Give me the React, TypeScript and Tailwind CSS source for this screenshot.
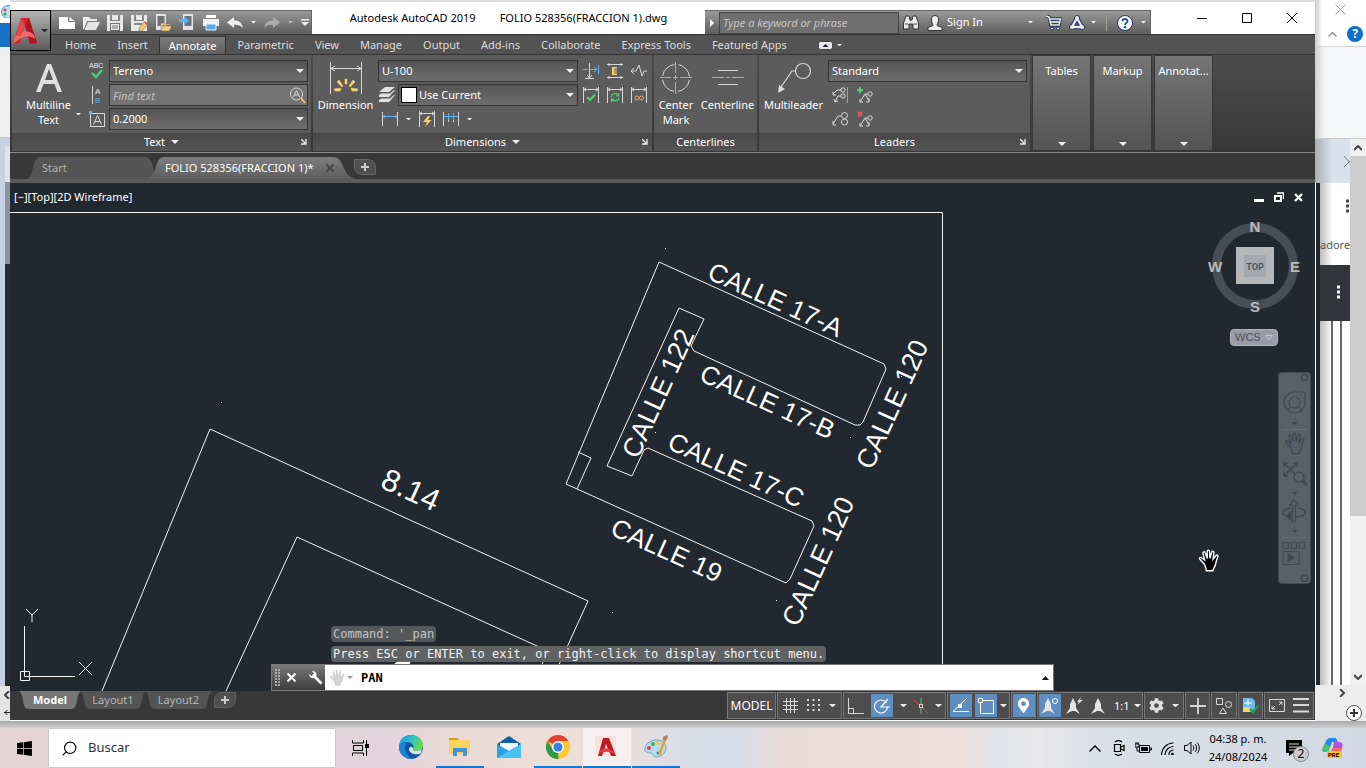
import React from "react";
import { FaWindows, FaCog, FaMapMarkerAlt } from "react-icons/fa";
import { Search } from "lucide-react";

type Kids = { children?: React.ReactNode };

const HAND =
  "M7.5 14.5L3.5 10.5C2.6 9.4 4 8.2 5 9L8 11.2L6.4 4.8C6.2 3.4 8 3 8.4 4.3L10.4 9.8L10.4 3C10.4 1.6 12.4 1.6 12.5 3L13 9.6L14.6 3.8C15 2.5 16.8 3 16.6 4.3L15.8 10.4L18.6 7C19.5 6 20.9 7 20.3 8.1C18.5 11.5 18.8 13.5 17.8 16C17 18.5 15.8 19.5 15.6 21L9.6 21C9.4 18.5 8.3 16 7.5 14.5Z";

function Caret({ color = "#f0f0f0", size = 8 }: { color?: string; size?: number }) {
  return (
    <svg width={size} height={size / 2} viewBox="0 0 8 4" className="shrink-0">
      <path d="M0 0H8L4 4Z" fill={color} />
    </svg>
  );
}

function Glyph({ w = 18, h = 18, box, children }: Kids & { w?: number; h?: number; box?: string }) {
  return (
    <svg width={w} height={h} viewBox={box ?? `0 0 ${w} ${h}`} fill="none" stroke="#d8d8d8" className="shrink-0">
      {children}
    </svg>
  );
}

function IconButton({ label, className = "", children }: Kids & { label: string; className?: string }) {
  return (
    <button aria-label={label} className={`flex shrink-0 items-center justify-center ${className}`}>
      {children}
    </button>
  );
}

function Combo({ label, value, className = "" }: { label: string; value: string; className?: string }) {
  return (
    <div className="relative min-w-0 flex-1">
      <select
        aria-label={label}
        className={`block h-[22px] w-full appearance-none border border-[#333] bg-linear-to-b from-[#555] to-[#6d6d6d] px-[3px] text-[11px] text-white ${className}`}
      >
        <option>{value}</option>
      </select>
      <span className="pointer-events-none absolute right-1 top-[9px]">
        <Caret />
      </span>
    </div>
  );
}

/* ---------- title bar ---------- */

function QuickAccess() {
  return (
    <div className="flex h-6 w-[261px] shrink-0 items-center gap-2 self-end border-t border-r border-[#666] bg-linear-to-b from-[#9a9a9a] to-[#5d5d5d] pl-2">
      <IconButton label="New" className="w-4">
        <Glyph w={16} h={16}><path d="M0 2H9V7H16V14H0Z" fill="#fff" stroke="none" /><path d="M10.500 2L15.500 6H10.500Z" fill="#fff" stroke="none" /></Glyph>
      </IconButton>
      <IconButton label="Open" className="w-4">
        <Glyph w={17} h={16}><path d="M0 14V2H6L8 4H14V6H4L1 14Z" fill="#eee" stroke="none" /><path d="M5 7H17L13 15H1.500Z" fill="#e4e4e4" stroke="none" /></Glyph>
      </IconButton>
      <IconButton label="Save" className="w-4">
        <Glyph w={16} h={16}><path d="M0 0H3V6H13V0H16V16H0Z M3 8V16H13V8Z" fill="#e8e8e8" fillRule="evenodd" stroke="none" /><path d="M5 0H11V5H5Z M4 9H12V15H4Z" fill="#e8e8e8" stroke="none" /><path d="M5 11H11M5 13H11" stroke="#777" /></Glyph>
      </IconButton>
      <IconButton label="Save As" className="w-4">
        <Glyph w={16} h={16}><path d="M0 0H3V6H13V0H16V16H0Z" fill="#e8e8e8" stroke="none" /><path d="M5 0H11V5H5Z" fill="#e8e8e8" stroke="none" /><path d="M3 8H11V10H3Z" fill="#888" stroke="none" /><path d="M8 13L13 7L16 10L11 16L8 16Z" fill="#f7c56c" stroke="#666" strokeWidth=".5" /><path d="M13 7L14 6L17 9L16 10Z" fill="#e05050" stroke="none" /></Glyph>
      </IconButton>
      <IconButton label="Open from mobile" className="w-4">
        <Glyph w={16} h={17}><path d="M1 0H11V16H1Z" fill="#e4e4e4" stroke="none" /><path d="M2.500 2H9.500V12H2.500Z" fill="#707070" stroke="none" /><path d="M6 9H10L11 10H15V11H8L6 16Z M8.500 12H17L14 17H6.500Z" fill="#f7c97b" stroke="#777" strokeWidth=".4" /></Glyph>
      </IconButton>
      <IconButton label="Save to mobile" className="w-4">
        <Glyph w={16} h={17}><path d="M4 0H14V16H4Z" fill="#e4e4e4" stroke="none" /><path d="M5.500 2H12.500V12H5.500Z" fill="#707070" stroke="none" /><path d="M0 5H5V2L10 6.500L5 11V8H0Z" fill="#5fb2f5" stroke="none" /></Glyph>
      </IconButton>
      <IconButton label="Plot" className="w-4">
        <Glyph w={16} h={16}><path d="M3 0H13V3H3Z" fill="#fff" stroke="none" /><path d="M0 4H16V11H0Z" fill="#f0f0f0" stroke="none" /><path d="M3 9H13V15H3Z" fill="#58aaf0" stroke="#eee" /></Glyph>
      </IconButton>
      <IconButton label="Undo" className="w-4">
        <Glyph w={16} h={12}><path d="M0 5.500L7 0V3.500C12 3 15 6 16 11C13 8 10 7.500 7 8V11Z" fill="#f0f0f0" stroke="none" /></Glyph>
      </IconButton>
      <Caret size={5} />
      <IconButton label="Redo" className="w-4">
        <Glyph w={16} h={12}><path d="M16 5.500L9 0V3.500C4 3 1 6 0 11C3 8 6 7.500 9 8V11Z" fill="#aaa" stroke="none" /></Glyph>
      </IconButton>
      <Caret size={5} color="#bbb" />
      <IconButton label="Customize quick access toolbar">
        <Glyph w={8} h={7}><path d="M0 0H8V1.500H0Z M0 3H8L4 7Z" fill="#f0f0f0" stroke="none" /></Glyph>
      </IconButton>
    </div>
  );
}

function InfoCenter() {
  return (
    <div className="flex h-6 w-[446px] shrink-0 items-center self-end border-t border-r border-[#666] bg-linear-to-b from-[#9a9a9a] to-[#5d5d5d] text-[11px] text-white">
      <IconButton label="Collapse search" className="w-3.5">
        <Glyph w={4} h={8}><path d="M0 0L4 4L0 8Z" fill="#fff" stroke="none" /></Glyph>
      </IconButton>
      <input
        aria-label="Search help"
        placeholder="Type a keyword or phrase"
        className="h-[22px] w-[180px] border border-[#444] bg-[#6f6f6f] px-[3px] text-[11px] italic placeholder:text-[#c6c6c6]"
      />
      <IconButton label="Search" className="w-6">
        <Glyph w={16} h={15}><path d="M3 1H6L7 5H9L10 1H13L15.500 8V14H10V9H6V14H.5V8Z" fill="#e9e9e9" stroke="#333" /><path d="M7.500 2V6M2 9H5M11 9H14" stroke="#444" /></Glyph>
      </IconButton>
      <button className="flex h-full items-center gap-1 pl-1">
        <Glyph w={16} h={16}><path d="M8 .5C11 .5 12 3 11.500 6C11 8 10 9 10 10.500L15 12.500V15.500H1V12.500L6 10.500C6 9 5 8 4.500 6C4 3 5 .5 8 .5Z" fill="#eee" stroke="#333" /></Glyph>
        Sign In
      </button>
      <span className="flex-1" />
      <Caret size={5} />
      <IconButton label="App store" className="ml-2.5 w-5">
        <Glyph w={17} h={16}><path d="M1 1L4 2L6 10H14L15.500 4H5" stroke="#1e2c58" strokeWidth="3.400" /><path d="M1 1L4 2L6 10H14L15.500 4H5M5 7H14" stroke="#eee" strokeWidth="1.600" /><circle cx="7" cy="13.500" r="1.500" fill="#eee" stroke="#1e2c58" /><circle cx="13" cy="13.500" r="1.500" fill="#eee" stroke="#1e2c58" /></Glyph>
      </IconButton>
      <IconButton label="Stay connected" className="mx-1 w-5">
        <Glyph w={16} h={15}><path d="M8 3L13 12H3Z" stroke="#1e2c58" strokeWidth="4.500" strokeLinejoin="round" /><circle cx="8" cy="3" r="2.500" fill="#eee" stroke="#1e2c58" /><circle cx="13" cy="12" r="2.500" fill="#eee" stroke="#1e2c58" /><circle cx="3" cy="12" r="2.500" fill="#eee" stroke="#1e2c58" /><path d="M8 3L13 12H3Z" stroke="#e6e8ee" strokeWidth="2.400" /></Glyph>
      </IconButton>
      <Caret size={5} />
      <span className="mx-2.5 h-4 w-px bg-[#a0a0a0]" />
      <IconButton label="Help" className="w-4">
        <Glyph w={16} h={16}><circle cx="8" cy="8" r="7.500" fill="#fff" stroke="#20336b" /><path d="M5.500 6.300C5.500 3.300 10.500 3.300 10.500 6.200C10.500 8 8 8 8 10" stroke="#2450a8" strokeWidth="1.900" /><circle cx="8" cy="12.200" r="1.200" fill="#2450a8" stroke="none" /></Glyph>
      </IconButton>
      <span className="mx-1 flex pl-1"><Caret size={5} /></span>
    </div>
  );
}

const TABS = ["Home", "Insert", "Annotate", "Parametric", "View", "Manage", "Output", "Add-ins", "Collaborate", "Express Tools", "Featured Apps"];

function Header() {
  return (
    <header className="flex bg-[#535353]">
      <div className="flex w-[41px] shrink-0 flex-col border-t-8 border-white">
        <IconButton label="Application menu" className="h-[41px] border border-black bg-linear-to-b from-[#b4b4b4] to-[#5d5d5d]">
          <Glyph w={26} h={30}>
            <path d="M8 2H16L24 27L17 28L12 10L7 27L0 28Z" fill="#d4262e" stroke="none" />
            <path d="M12 10L16 2L24 27L17 28Z" fill="#b01620" stroke="none" />
            <path d="M2 20C8 14 16 14 21 19L22 23C15 18 9 20 0 28Z" fill="#f06868" stroke="none" />
            <path d="M8 2L12 10L8 20L3 20Z" fill="#e5484d" stroke="none" />
          </Glyph>
          <span className="ml-0.5 flex"><Caret color="#222b3c" size={7} /></span>
        </IconButton>
      </div>
      <div className="flex min-w-0 flex-1 flex-col">
        <div className="flex h-8 bg-white">
          <QuickAccess />
          <h1 className="flex min-w-0 flex-1 items-center justify-center gap-6 whitespace-nowrap text-[11px] text-black">
            <span>Autodesk AutoCAD 2019</span>
            <span>FOLIO 528356(FRACCION 1).dwg</span>
          </h1>
          <InfoCenter />
          <div className="ml-7 flex shrink-0">
            <IconButton label="Minimize" className="w-[45px]"><Glyph w={10} h={10}><path d="M0 5.500H10" stroke="#000" /></Glyph></IconButton>
            <IconButton label="Maximize" className="w-[45px]"><Glyph w={10} h={10}><path d="M.5 .5H9.500V9.500H.5Z" stroke="#000" /></Glyph></IconButton>
            <IconButton label="Close" className="w-[46px]"><Glyph w={10} h={10}><path d="M0 0L10 10M10 0L0 10" stroke="#000" /></Glyph></IconButton>
          </div>
        </div>
        <nav className="flex h-5 items-end gap-px border-t border-[#333] pl-1 text-[11px] text-[#dcdcdc]">
          {TABS.map((t) => (
            <button
              key={t}
              className={
                t === "Annotate"
                  ? "h-[18px] border border-b-0 border-[#333] bg-linear-to-b from-[#7c7c7c] to-[#606060] px-[9px] leading-4 text-white"
                  : "h-[18px] px-2.5 leading-[18px]"
              }
            >
              {t}
            </button>
          ))}
          <IconButton label="Minimize ribbon" className="ml-5 h-[18px] gap-1">
            <Glyph w={15} h={9}><rect x=".5" y=".5" width="14" height="8" rx="2" fill="#e4e8ee" stroke="#444" /><path d="M4.500 6H10.500L7.500 3Z" fill="#222" stroke="none" /></Glyph>
            <Caret size={5} />
          </IconButton>
        </nav>
      </div>
    </header>
  );
}

/* ---------- ribbon ---------- */

function Panel({ title, className, menu, launcher, children }: Kids & { title: string; className: string; menu?: boolean; launcher?: boolean }) {
  return (
    <section className={`flex shrink-0 flex-col bg-[#5c5c5c] ${className}`}>
      <div className="flex flex-1 items-start pt-[5px]">{children}</div>
      <footer className="relative flex h-[18px] items-center justify-center gap-1.5 bg-linear-to-b from-[#484848] to-[#555]">
        {title}
        {menu && <Caret />}
        {launcher && (
          <button aria-label={`${title} settings`} className="absolute right-1 top-1.5">
            <Glyph w={6} h={6}><path d="M0 0L4 4M5 0V5H0" stroke="#eee" strokeWidth="1.300" /></Glyph>
          </button>
        )}
      </footer>
    </section>
  );
}

function BigButton({ lines, className, icon, menu }: { lines: string[]; className: string; icon: React.ReactNode; menu?: boolean }) {
  return (
    <button className={`relative flex shrink-0 flex-col items-center text-[11px] leading-[15px] ${className}`}>
      <span className="mb-0.5 flex h-[35px] items-center">{icon}</span>
      {lines.map((l) => (
        <span key={l}>{l}</span>
      ))}
      {menu && (
        <span className="absolute bottom-3 right-1 flex">
          <Caret size={5} />
        </span>
      )}
    </button>
  );
}

function DimFrame({ children }: Kids) {
  return (
    <Glyph w={16} h={16}>
      <path d="M.5 0V16M15.500 0V16M1 2.500H15M3 .8L1 2.500L3 4.200M13 .8L15 2.500L13 4.200" />
      {children}
    </Glyph>
  );
}

function TextPanel() {
  return (
    <Panel title="Text" className="w-[299px]" menu launcher>
      <div className="flex w-[73px] shrink-0">
        <BigButton
          lines={["Multiline", "Text"]}
          className="w-full"
          menu
          icon={<Glyph w={26} h={28}><path d="M0 28L11 0H15L26 28H21.500L18.500 20H7.500L4.500 28Z M9 16H17L13 5Z" fill="#e0e0e0" fillRule="evenodd" stroke="none" /></Glyph>}
        />
      </div>
      <div className="grid w-6 shrink-0 grid-rows-3 gap-0.5">
        <IconButton label="Check spelling" className="h-[22px]">
          <Glyph w={18} h={20}>
            <text x="1" y="7" fontSize="7" fill="#e8e8e8" stroke="none" fontFamily="Liberation Sans, sans-serif">ABC</text>
            <path d="M4 12L8 16L14 9" stroke="#4fd07c" strokeWidth="2.400" />
          </Glyph>
        </IconButton>
        <IconButton label="Text align" className="h-[22px]">
          <Glyph w={12} h={20}>
            <path d="M1.500 1V19" />
            <text x="4" y="9" fontSize="8" fill="#e8e8e8" stroke="none" fontFamily="Liberation Sans, sans-serif">A</text>
            <text x="4" y="18" fontSize="8" fill="#5fb2f5" stroke="none" fontFamily="Liberation Sans, sans-serif">B</text>
          </Glyph>
        </IconButton>
        <IconButton label="Text height" className="h-[22px]">
          <Glyph w={16} h={16}>
            <path d="M1.500 2.500H15.500V15.500H1.500Z" />
            <path d="M0 0H3V3H0Z" fill="#5fb2f5" stroke="none" />
            <path d="M4.500 13.500L8.500 4.500L12.500 13.500M6 10.500H11" />
          </Glyph>
        </IconButton>
      </div>
      <div className="flex min-w-0 flex-1 flex-col gap-0.5 pr-[3px]">
        <Combo label="Text style" value="Terreno" />
        <div className="relative">
          <input aria-label="Find text" placeholder="Find text" className="block h-[22px] w-full border border-[#333] bg-[#737373] px-[3px] text-[11px] italic placeholder:text-[#c0c0c0]" />
          <button aria-label="Find" className="absolute right-0.5 top-[3px]">
            <Glyph w={17} h={17}><circle cx="7.500" cy="7" r="6" /><path d="M12 11L16 16" stroke="#f0c070" strokeWidth="2" /><path d="M4.500 10L7.500 3.500L10.500 10M5.500 8H9.500" /></Glyph>
          </button>
        </div>
        <Combo label="Text size" value="0.2000" />
      </div>
    </Panel>
  );
}

function DimensionsPanel() {
  return (
    <Panel title="Dimensions" className="w-[339px]" menu launcher>
      <BigButton
        lines={["Dimension"]}
        className="w-[65px]"
        icon={
          <Glyph w={32} h={34}>
            <path d="M.5 1V33M31.500 1V33M1 7.500H31M5 5L1 7.500L5 10M27 5L31 7.500L27 10" />
            <path d="M15 23V18H17V23ZM7 21L9 19L13 25L12 26ZM25 21L23 19L19 25L20 26ZM5 30L4 28L11 27L10 30ZM27 30L28 28L21 27L22 30Z" fill="#f9cf72" stroke="#f9cf72" strokeWidth=".6" />
          </Glyph>
        }
      />
      <div className="flex w-[200px] shrink-0 flex-col gap-0.5">
        <Combo label="Dimension style" value="U-100" />
        <div className="flex items-center">
          <span className="flex w-5 pl-px">
            <Glyph w={17} h={16}>
              <path d="M6 0H16L10 5H0ZM0 8L2.500 6.500L11 6.500L15 3H16L10 10H0ZM0 13L2.500 11.500H11L15 8H16L10 15H0Z" fill="#e0e0e0" stroke="none" />
            </Glyph>
          </span>
          <div className="relative flex min-w-0 flex-1">
            <Combo label="Dimension layer" value="Use Current" className="pl-5" />
            <span className="pointer-events-none absolute left-[3px] top-[3px] size-4 border border-black bg-white" />
          </div>
        </div>
        <div className="flex h-[22px] items-center pl-1">
          <IconButton label="Quick dimension"><Glyph w={16} h={14}><path d="M.5 0V14M15.500 0V14" /><path d="M1 4.500H15M3 3L1 4.500L3 6M13 3L15 4.500L13 6" stroke="#5fb2f5" /></Glyph></IconButton>
          <span className="mx-2 flex"><Caret size={5} /></span>
          <IconButton label="Quick"><DimFrame><path d="M9 5L4 11H8L6 16L12.500 9H9L11 5Z" fill="#f9cf72" stroke="none" /></DimFrame></IconButton>
          <IconButton label="Continue" className="ml-2"><Glyph w={16} h={14}><path d="M.5 0V14M15.500 0V14M5.500 1V10M10.500 1V10" /><path d="M1 4.500H15M5.500 1V8M10.500 1V8" stroke="#5fb2f5" /></Glyph></IconButton>
          <span className="ml-2 flex"><Caret size={5} /></span>
        </div>
      </div>
      <div className="grid flex-1 grid-cols-3 gap-y-0.5 px-px">
        <IconButton label="Break" className="h-[22px]"><Glyph w={16} h={16}><path d="M0 6.500H5M7 6.500H14M15.500 2V11M11 4L14 6.500L11 9" stroke="#5fb2f5" /><path d="M6.500 0V15M4 12L6.500 15L9 12M2 15.500H11" /></Glyph></IconButton>
        <IconButton label="Adjust space" className="h-[22px]"><Glyph w={16} h={16}><path d="M0 1.500H16M0 14.500H16M2 0V3M14 0V3M2 13V16M14 13V16" /><path d="M5 4H10V12H5Z" fill="#f9cf72" stroke="none" /><path d="M7 6H10M7 8H10M7 10H10" stroke="#555" /></Glyph></IconButton>
        <IconButton label="Jogged line" className="h-[22px]"><Glyph w={16} h={14}><path d="M0 7H5L8 1L11 12L13 7H16M3 4L0 7L3 10" /></Glyph></IconButton>
        <IconButton label="Inspect" className="h-[22px]"><DimFrame><path d="M4 10L7 13L12 7.500" stroke="#4fd07c" strokeWidth="2" /></DimFrame></IconButton>
        <IconButton label="Update" className="h-[22px]"><DimFrame><path d="M4 10C5 6 10 6 11 8M11.500 6V9H9M12 11C11 15 6 14 5 12.500M4.500 15V12H7" stroke="#4fd07c" strokeWidth="1.200" /></DimFrame></IconButton>
        <IconButton label="Reassociate" className="h-[22px]"><DimFrame><circle cx="6" cy="11" r="2" stroke="#eda071" /><circle cx="10.500" cy="11" r="2" stroke="#eda071" /></DimFrame></IconButton>
      </div>
    </Panel>
  );
}

function CenterlinesPanel() {
  return (
    <Panel title="Centerlines" className="w-[103px]">
      <BigButton
        lines={["Center", "Mark"]}
        className="w-11"
        icon={
          <Glyph w={32} h={32}>
            <circle cx="16" cy="16" r="13.500" strokeDasharray="17.200 4" strokeDashoffset="-2" />
            <path d="M0 15.500H11M13 15.500H18M20 15.500H32M15.500 0V11M15.500 13V18M15.500 20V32" stroke="#6fbcf7" />
          </Glyph>
        }
      />
      <BigButton
        lines={["Centerline"]}
        className="w-[59px]"
        icon={<Glyph w={32} h={32}><path d="M6 8.500H26M6 22.500H26" /><path d="M0 15.500H12M14 15.500H18M20 15.500H32" stroke="#6fbcf7" /></Glyph>}
      />
    </Panel>
  );
}

function LeadersPanel() {
  return (
    <Panel title="Leaders" className="w-[271px]" launcher>
      <BigButton
        lines={["Multileader"]}
        className="w-[69px]"
        icon={<Glyph w={34} h={32}><circle cx="26" cy="9" r="7.500" strokeWidth="1.200" /><path d="M18.500 9H15L4 25" strokeWidth="1.200" /><path d="M1 31L2 23L8 27Z" fill="#ddd" stroke="none" /></Glyph>}
      />
      <div className="flex min-w-0 flex-1 flex-col gap-0.5 pr-[3px]">
        <Combo label="Multileader style" value="Standard" />
        <div className="flex h-[22px] items-center gap-2 pl-1">
          <IconButton label="Align leaders"><Glyph w={17} h={16}><path d="M15.500 0V16" stroke="#5fb2f5" /><circle cx="11" cy="3" r="2.200" /><circle cx="11" cy="9" r="2.200" /><path d="M9 3H5L1 7M9 9H6L3 15M1 5V8H4M2 12L3 15L6 14" /></Glyph></IconButton>
          <IconButton label="Add leader"><Glyph w={16} h={16}><circle cx="13" cy="7" r="2.200" /><path d="M11 7H8L3 15M8 7L12 14M3 12V15H6M12 11V15H9" /><path d="M3 0V6M0 3H6" stroke="#4fd07c" strokeWidth="2" /></Glyph></IconButton>
        </div>
        <div className="flex h-[22px] items-center gap-2 pl-1">
          <IconButton label="Collect leaders"><Glyph w={17} h={16}><circle cx="12.500" cy="4.500" r="3" /><circle cx="12.500" cy="11" r="3" /><path d="M9 5H6L1 13M1 10V14H4" /></Glyph></IconButton>
          <IconButton label="Remove leader"><Glyph w={16} h={16}><circle cx="13" cy="7" r="2.200" /><path d="M11 7H8L3 15M8 7L12 14M3 12V15H6M12 11V15H9" /><path d="M1 1L5 5M5 1L1 5" stroke="#ee5555" strokeWidth="1.800" /></Glyph></IconButton>
        </div>
      </div>
    </Panel>
  );
}

function Ribbon() {
  return (
    <div className="flex h-[99px] gap-0.5 border-y border-t-[#333] border-b-[#8a8a8a] bg-linear-to-b from-[#4c4c4c] to-[#373737] pb-px pl-0.5 text-[11px] text-white">
      <TextPanel />
      <DimensionsPanel />
      <CenterlinesPanel />
      <LeadersPanel />
      {["Tables", "Markup", "Annotat..."].map((t) => (
        <button key={t} className="flex w-[59px] shrink-0 flex-col items-center justify-between border border-[#383838] bg-linear-to-b from-[#757575] to-[#545454] pb-1 pt-[7px] text-[11px] leading-4">
          {t}
          <Caret />
        </button>
      ))}
    </div>
  );
}

function FileTabs() {
  return (
    <div className="flex h-[30px] items-end border-b-4 border-[#5a5a5a] bg-[#383838] pl-[17px] text-[11px]">
      <button className="relative flex h-[22px] w-[128px] items-center pl-[15px] text-[#b4b4b4]">
        <svg className="absolute inset-0 size-full" viewBox="0 0 128 22" preserveAspectRatio="none">
          <path d="M0 22C8 18 4 0 14 0H118C128 0 124 18 134 22Z" fill="#555" />
        </svg>
        <span className="relative">Start</span>
      </button>
      <div className="relative flex h-[22px] w-[193px] items-center text-white">
        <svg className="absolute inset-0 size-full overflow-visible" viewBox="0 0 193 22" preserveAspectRatio="none">
          <defs>
            <linearGradient id="active-tab" x1="0" y1="0" x2="0" y2="1">
              <stop offset="0" stopColor="#7d7d7d" />
              <stop offset="1" stopColor="#5e5e5e" />
            </linearGradient>
          </defs>
          <path d="M-8 22C4 18-2 0 10 0H178C190 0 186 18 200 22Z" fill="url(#active-tab)" />
        </svg>
        <button className="relative pl-2.5">FOLIO 528356(FRACCION 1)*</button>
        <button aria-label="Close drawing" className="absolute right-3.5 top-[7px]">
          <Glyph w={8} h={8}><path d="M0 0L8 8M8 0L0 8" stroke="#444" strokeWidth="1.800" /></Glyph>
        </button>
      </div>
      <IconButton label="New drawing" className="mb-1 ml-1.5 h-4 w-[22px] rounded-bl-lg rounded-tr-lg border border-[#666] bg-[#505050]">
        <Glyph w={8} h={8}><path d="M4 0V8M0 4H8" stroke="#ccc" strokeWidth="2" /></Glyph>
      </IconButton>
    </div>
  );
}

/* ---------- drawing area ---------- */

const STREETS: { x: number; y: number; up?: boolean; text: string }[] = [
  { x: 696, y: 95, text: "CALLE 17-A" },
  { x: 688, y: 197, text: "CALLE 17-B" },
  { x: 656, y: 265, text: "CALLE 17-C" },
  { x: 599, y: 351, text: "CALLE 19" },
  { x: 628, y: 277, up: true, text: "CALLE 122" },
  { x: 862, y: 288, up: true, text: "CALLE 120" },
  { x: 788, y: 445, up: true, text: "CALLE 120" },
];

const POINTS = [[655, 65], [211, 219], [645, 249], [840, 254], [602, 429], [766, 417], [891, 193]];

function Drawing() {
  return (
    <svg className="absolute inset-0 size-full" fill="none" stroke="#f2f2f2">
      <path d="M0 29.500H932.500V520" />
      <path d="M649 79L874 181L876 186L853 239L850 242H845L684 168L681 163L694 136L669 125L597 283L622 293L634 267L638 265L802 338L804 343L780 396L776 400L556 301Z" />
      <path d="M568 269L581 275L567 306" />
      <path d="M92 508L200 246L578 418L537 508M216 508L287 354L538 468L520 508" />
      <path d="M383 482L388 478H401L399 482Z" fill="#fff" stroke="none" />
      <g fill="#fff" stroke="none" fontFamily="Liberation Sans, Arial, sans-serif">
        {STREETS.map((s, i) => (
          <text key={i} fontSize={s.up ? 27 : 26} transform={`translate(${s.x} ${s.y}) rotate(${s.up ? -65.6 : 24.4})`}>{s.text}</text>
        ))}
        <text transform="translate(369 304) rotate(24.4)" fontSize="31">8.14</text>
        {POINTS.map(([x, y]) => (
          <rect key={`${x}-${y}`} x={x} y={y} width="1" height="1" />
        ))}
      </g>
      <path d="M14.500 443V493.500H65M10.500 488.500H19.500V497.500H10.500ZM16 426L22 432L28 426M22 432V439M69 479L82 492M82 479L69 492" />
      <g transform="translate(1186 365) scale(1.080)">
        <path d={HAND} fill="#000" stroke="#fff" strokeWidth="1.300" />
      </g>
    </svg>
  );
}

function ViewCube() {
  return (
    <svg className="absolute right-2.5 top-[33px]" width="100" height="100" viewBox="0 0 100 100">
      <circle cx="50" cy="50" r="38.500" fill="none" stroke="#474e57" strokeWidth="9" />
      <g fontFamily="Liberation Sans, Arial, sans-serif" fontWeight="700" fontSize="15" fill="#b9bbbd" textAnchor="middle">
        <text x="50" y="16">N</text>
        <text x="50" y="96">S</text>
        <text x="10" y="56">W</text>
        <text x="90" y="56">E</text>
      </g>
      <rect x="31" y="31" width="38" height="37" fill="#b5b7b8" />
      <rect x="39" y="39" width="22" height="22" fill="#a2a9af" />
      <text x="50" y="54" textAnchor="middle" fontSize="9" fontWeight="700" fill="#4a5460" fontFamily="Roboto, sans-serif">TOP</text>
    </svg>
  );
}

function NavBar() {
  return (
    <div className="absolute right-1 top-[189px] flex w-[33px] flex-col items-center rounded border border-[#444a50] bg-[#5a6065] text-[#41474d]">
      <svg width="31" height="210" viewBox="0 0 31 210" fill="none" stroke="#42484f" strokeWidth="1.200">
        <circle cx="25.500" cy="4.500" r="3.500" fill="#494f55" />
        <path d="M24 3L27 6M27 3L24 6" stroke="#666" />
        <path d="M15.500 19H24Q26 19 26 21V29.500A10.500 10.500 0 1 1 15.500 19Z" />
        <circle cx="15.500" cy="29.500" r="5.500" />
        <path d="M11 34L8 38M20 34L23 38" />
        <path d="M12.500 49H18.500L15.500 52Z" fill="#3c4248" stroke="none" />
        <path d="M3 56.500H28M3 164.500H28" stroke="#6a7075" />
        <g transform="translate(3 58) scale(1.080)"><path d={HAND} fill="#575e68" /></g>
        <path d="M5 90L18 103M18 90L5 103M5 94V90H9M14 90H18V94M5 99V103H9" strokeWidth="1.500" />
        <circle cx="20" cy="104" r="5" fill="#5a6065" strokeWidth="1.500" />
        <path d="M23 108L28 112" strokeWidth="3" />
        <path d="M12.500 119H18.500L15.500 122Z" fill="#3c4248" stroke="none" />
        <path d="M13.500 149V132H11L15 127L19 132H16.500V149Z" />
        <path d="M11 135C2 137 2 142 8 143L12 144M19 135C29 137 29 143 17 144" strokeWidth="1.500" />
        <path d="M7 143L12 139V147Z" fill="#3c4248" />
        <path d="M12.500 157H18.500L15.500 160Z" fill="#3c4248" stroke="none" />
        <path d="M4 169.500H9.500V175.500H4ZM12 169.500H17.500V175.500H12ZM20 169.500H25.500V175.500H20ZM4 178.500H20V191.500H4Z" />
        <path d="M9 181V189L15 185Z" fill="#42484f" />
        <circle cx="25.500" cy="205.500" r="3.500" fill="#494f55" />
        <path d="M23.500 204.500H27.500M23.500 206.500H27.500" stroke="#6a7075" />
      </svg>
    </div>
  );
}

function CommandLine() {
  return (
    <div className="absolute bottom-0 left-[261px] w-[60%]">
      <div className="flex flex-col items-start gap-1 pb-0.5 pl-[60px] font-['DejaVu_Sans_Mono',monospace] text-[12px] leading-4">
        <p className="rounded-sm bg-[#55585a] px-0.5 text-[#c4c4c4]">Command: &apos;_pan</p>
        <p className="rounded-sm bg-[#636465]/95 px-0.5 text-[#f2f2f2]">Press ESC or ENTER to exit, or right-click to display shortcut menu.</p>
      </div>
      <div className="flex h-[27px] border border-[#777] bg-white">
        <div className="flex w-[53px] shrink-0 items-center gap-[7px] bg-linear-to-b from-[#7b7b7b] to-[#3d3d3d] pl-[3px]">
          <Glyph w={5} h={17}><path d="M1 0V17M4 0V17" strokeDasharray="2 1" strokeWidth="2" stroke="#aaa" /></Glyph>
          <IconButton label="Close command line"><Glyph w={9} h={9}><path d="M.5 .5L8.500 8.500M8.500 .5L.5 8.500" stroke="#fff" strokeWidth="2" /></Glyph></IconButton>
          <IconButton label="Customize" className="pl-1.5"><Glyph w={14} h={14}><path d="M5.500 5.500L12.500 12.500" stroke="#fff" strokeWidth="2.600" /><path d="M3 0L5 2.500L2.500 5L0 3C0 6 3 8 5 7L7.500 5C8 2 6 0 3 0Z" fill="#fff" stroke="none" /></Glyph></IconButton>
        </div>
        <Glyph w={22} h={25} box="2 -1 22 25"><path d={HAND} fill="#d2d2d2" stroke="none" transform="translate(4 2) scale(.85)" /></Glyph>
        <span className="flex items-center"><Caret size={6} color="#999" /></span>
        <input aria-label="Command" defaultValue="PAN" className="ml-2 min-w-0 flex-1 font-['DejaVu_Sans_Mono',monospace] text-[12px] font-bold text-black outline-none" />
        <IconButton label="Command history" className="w-4"><Glyph w={7} h={4}><path d="M0 4H7L3.500 0Z" fill="#111" stroke="none" /></Glyph></IconButton>
      </div>
    </div>
  );
}

function Viewport() {
  return (
    <main className="relative min-h-0 flex-1 overflow-hidden bg-[#212830]">
      <Drawing />
      <div className="relative flex justify-between pl-1 pr-3 pt-1.5 text-[11px] leading-4 text-white">
        <span>[−][Top][2D Wireframe]</span>
        <div className="flex items-center gap-2.5">
          <IconButton label="Minimize view"><Glyph w={10} h={10}><path d="M0 8.500H10" stroke="#fff" strokeWidth="3" /></Glyph></IconButton>
          <IconButton label="Restore view"><Glyph w={10} h={10}><path d="M1 4H7V9H1Z" stroke="#fff" strokeWidth="2" /><path d="M3 1H9.500V7" stroke="#fff" strokeWidth="1.300" /></Glyph></IconButton>
          <IconButton label="Close view"><Glyph w={9} h={9}><path d="M1 1L8 8M8 1L1 8" stroke="#fff" strokeWidth="2.400" /></Glyph></IconButton>
        </div>
      </div>
      <ViewCube />
      <button className="absolute right-[37px] top-[146px] flex h-[17px] w-12 items-center justify-between rounded border border-[#b0b2be] bg-[#9a9ca9] px-1 font-['Liberation_Sans',sans-serif] text-[11px] text-[#4c505c]">
        WCS <Glyph w={8} h={5}><path d="M.5 .5H7.500L4 4.500Z" stroke="#c4c6d0" /></Glyph>
      </button>
      <NavBar />
      <CommandLine />
    </main>
  );
}

/* ---------- status bar ---------- */

function LayoutTab({ name, active, className }: { name: string; active?: boolean; className: string }) {
  return (
    <button className={`relative h-[18px] text-center ${active ? "font-bold text-white" : "text-[#b4b4b4]"} ${className}`}>
      <svg className="absolute inset-0 size-full overflow-visible" viewBox="0 0 60 18" preserveAspectRatio="none">
        <path d="M-2 0C4 4 0 18 8 18H52C60 18 56 4 62 0Z" fill={active ? "#767676" : "#545454"} />
      </svg>
      <span className="relative">{name}</span>
    </button>
  );
}

function Group({ className = "", children }: Kids & { className?: string }) {
  return <div className={`flex h-[27px] shrink-0 items-center justify-around border border-[#777] bg-[#4d4d4d] ${className}`}>{children}</div>;
}

const ON = "h-[23px] w-[22px] bg-[#5f8ec0]";
const OFF = "h-[23px] w-[22px]";

function Compass({ extra }: { extra?: React.ReactNode }) {
  return (
    <Glyph w={18} h={18}>
      <path d="M7 1L10 7V11L14 17L9 14H6L0 17L4 11V7Z" fill="#e4e4e4" stroke="none" />
      {extra}
    </Glyph>
  );
}

function StatusBar() {
  return (
    <div className="flex h-[30px] items-start justify-between border-b border-white bg-[#383838] pr-px text-[12px] leading-4 text-white">
      <div className="flex gap-[3px] pl-[11px] text-[11px]">
        <LayoutTab name="Model" active className="w-[58px]" />
        <LayoutTab name="Layout1" className="w-[62px]" />
        <LayoutTab name="Layout2" className="w-[63px]" />
        <IconButton label="New layout" className="mt-px ml-px h-4 w-[22px] rounded-br-lg rounded-tl-lg border border-[#606060] bg-[#505050]">
          <Glyph w={8} h={8}><path d="M4 0V8M0 4H8" stroke="#ccc" strokeWidth="2" /></Glyph>
        </IconButton>
      </div>
      <div className="flex gap-px pt-px">
        <Group className="w-[49px]"><button className="text-[12px]">MODEL</button></Group>
        <Group className="w-[65px]">
          <IconButton label="Grid"><Glyph w={15} h={15}><path d="M3.500 0V15M7.500 0V15M11.500 0V15M0 3.500H15M0 7.500H15M0 11.500H15" /></Glyph></IconButton>
          <IconButton label="Snap"><Glyph w={13} h={13}><path d="M0 1H13M0 6H13M0 11H13" strokeDasharray="2 3.500" strokeWidth="2" /></Glyph></IconButton>
          <Caret size={7} />
        </Group>
        <Group className="w-[103px]">
          <IconButton label="Ortho"><Glyph w={16} h={16}><path d="M.5 0V15.500H16M.5 10.500H5.500V15" /></Glyph></IconButton>
          <IconButton label="Polar tracking" className={ON}><Glyph w={18} h={16}><path d="M13.500 5A6.500 6.500 0 1 0 14.500 9M17 9H8L15 1" stroke="#fff" strokeWidth="1.200" /></Glyph></IconButton>
          <Caret size={7} />
          <IconButton label="Isometric drafting"><Glyph w={14} h={16}><path d="M0 2L14 15" stroke="#e05252" /><path d="M7 0V16" stroke="#4fd07c" /><rect x="5.500" y="6.500" width="3" height="3" fill="#444" /></Glyph></IconButton>
          <Caret size={7} />
        </Group>
        <Group className="w-[63px]">
          <IconButton label="Object snap tracking" className={ON}><Glyph w={17} h={15}><path d="M15 0L1 13.500H17" stroke="#fff" /><path d="M6 6H10V10H6Z" fill="#fff" stroke="none" /></Glyph></IconButton>
          <IconButton label="Object snap" className={ON}><Glyph w={16} h={16}><path d="M2.500 5V15.500H15.500V2.500H5M.5 .5H4.500V4.500H.5Z" stroke="#fff" /></Glyph></IconButton>
          <Caret size={7} />
        </Group>
        <Group className="w-[25px]">
          <IconButton label="Geographic location" className={ON}><FaMapMarkerAlt size={15} color="#fff" /></IconButton>
        </Group>
        <Group className="w-[106px]">
          <IconButton label="Annotation visibility" className={ON}><Compass extra={<circle cx="14" cy="4" r="2.500" stroke="#fff" />} /></IconButton>
          <IconButton label="Auto scale" className={OFF}><Compass extra={<path d="M15 0L11 5H13L11 8L17 3H14Z" fill="#ddd" stroke="none" />} /></IconButton>
          <IconButton label="Annotation scale" className={OFF}><Compass /></IconButton>
          <button className="flex items-center gap-1 text-[11px]">1:1 <Caret size={7} /></button>
        </Group>
        <Group className="w-10">
          <IconButton label="Workspace"><FaCog size={15} color="#ddd" /></IconButton>
          <Caret size={7} />
        </Group>
        <Group className="w-[25px]"><IconButton label="Annotation monitor"><Glyph w={16} h={16}><path d="M8 0V16M0 8H16" strokeWidth="1.800" /></Glyph></IconButton></Group>
        <Group className="w-[26px]"><IconButton label="Isolate objects"><Glyph w={16} h={16}><path d="M.5 .5H6.500V6.500H.5ZM3.500 15.500L7 10L10.500 15.500Z" /><circle cx="12.500" cy="6.500" r="3" /></Glyph></IconButton></Group>
        <Group className="w-[25px]"><IconButton label="Trusted file"><Glyph w={16} h={16}><path d="M0 0H9L12 3V14H0Z" fill="#6db9ee" stroke="none" /><path d="M5 1V8M1 5H9" stroke="#fff" /><path d="M0 9H7V14H0Z" fill="#f8d860" stroke="none" /><path d="M7 11L10 14L15 8" stroke="#23a15a" strokeWidth="2.200" /></Glyph></IconButton></Group>
        <Group className="w-[50px]">
          <IconButton label="Clean screen"><Glyph w={16} h={13}><path d="M.5 .5H15.500V12.500H.5ZM3 7V10H6M3 10L6 7M10 3H13V6M13 3L10 6" /></Glyph></IconButton>
          <IconButton label="Customization"><Glyph w={16} h={15}><path d="M0 1H16M0 7H16M0 13.500H16" strokeWidth="1.800" /></Glyph></IconButton>
        </Group>
      </div>
    </div>
  );
}

/* ---------- windows behind and taskbar ---------- */

function LeftEdge() {
  return (
    <div className="flex w-2.5 shrink-0 flex-col overflow-hidden bg-[#c6d1e3]">
      <div className="h-[23px] bg-white pt-1">
        <Glyph w={14} h={14}><circle cx="8" cy="8" r="6.500" fill="#bfe0ee" stroke="#4b93b5" /><circle cx="5" cy="6" r="1.500" fill="#e04040" stroke="none" /><circle cx="5" cy="10" r="1.500" fill="#3a9d4a" stroke="none" /></Glyph>
      </div>
      <div className="h-6 bg-[#1770c4]" />
      <div className="h-[91px] border-b border-[#c8c8c8] bg-[#eeeff1]" />
      <div className="ml-[5px] mt-2 h-9 bg-[#dfe2e7]" />
      <div className="ml-[5px] flex-1 border-t-[82px] border-[#8d949c] bg-[#272c33]" />
      <div className="flex h-[35px] flex-col items-center justify-around bg-[#e4e4e4] pl-1">
        <Glyph w={6} h={8}><path d="M5 0L1 4L5 8" stroke="#444" strokeWidth="2" /></Glyph>
        <Glyph w={7} h={7}><path d="M0 3.500H7M3.500 1L1 3.500L3.500 6" stroke="#223" /></Glyph>
      </div>
    </div>
  );
}

function Dots({ color }: { color: string }) {
  return <Glyph w={4} h={16}><path d="M0 2H3M0 7H3M0 12H3" stroke={color} strokeWidth="3" /></Glyph>;
}

function RightEdge() {
  return (
    <div className="flex w-[51px] shrink-0 flex-col overflow-hidden bg-[#f5f6f7]">
      <div className="flex h-[47px] flex-col justify-between border-b border-[#d4d4d4] bg-linear-to-r from-[#ccc] via-white via-15% to-white pb-1 pt-1">
        <span className="flex justify-center"><Glyph w={11} h={11}><path d="M.5 .5L10.500 10.500M10.500 .5L.5 10.500" stroke="#999" /></Glyph></span>
        <span className="flex items-center justify-end gap-2.5 pr-[3px]">
          <Glyph w={9} h={5}><path d="M.5 4.500L4.500 .5L8.500 4.500" stroke="#999" strokeWidth="1.500" /></Glyph>
          <span className="flex size-4 items-center justify-center rounded-full bg-[#0b6ed0] text-[12px] font-bold leading-4 text-white">?</span>
        </span>
      </div>
      <div className="h-[91px] bg-linear-to-r from-[#cfcfd0] to-[#f5f6f7] to-20%" />
      <div className="flex min-h-0 flex-1 border-t border-[#ccc]">
        <div className="flex w-[35px] flex-col overflow-hidden">
          <div className="flex h-11 items-center justify-end bg-linear-to-r from-[#a9aeb6] to-[#dbe1ec] to-50%">
            <Glyph w={8} h={11}><path d="M2 0L12 11M2 11L8 5" stroke="#777" /></Glyph>
          </div>
          <div className="flex min-h-0 flex-1">
            <div className="w-[5px] border-l border-white bg-[#24282d]" />
            <div className="flex min-w-0 flex-1 flex-col bg-linear-to-r from-[#bbb] to-white to-40%">
              <div className="flex h-[82px] flex-col items-end justify-between pb-3 pt-4">
                <Dots color="#444" />
                <span className="self-start whitespace-nowrap text-[11px] leading-4 text-[#555]">adore</span>
              </div>
              <div className="flex h-14 items-center justify-center bg-[#313539] pl-2"><Dots color="#fff" /></div>
              <div className="ml-[11px] mr-2 flex-1 border-x-2 border-[#666]" />
            </div>
          </div>
        </div>
        <div className="flex w-4 flex-col items-center bg-[#f0f0f0]">
          <span className="flex h-[17px] items-center"><Glyph w={8} h={6}><path d="M0 5L4 1L8 5" stroke="#444" strokeWidth="2" /></Glyph></span>
          <span className="h-[360px] w-full bg-[#cdcdcd]" />
          <span className="flex-1" />
          <span className="flex h-4 items-center"><Glyph w={8} h={6}><path d="M0 1L4 5L8 1" stroke="#444" strokeWidth="2" /></Glyph></span>
        </div>
      </div>
      <div className="flex h-9 flex-col items-end justify-between bg-[#ededed] pt-1">
        <span className="pr-[21px]"><Glyph w={6} h={8}><path d="M1 0L5 4L1 8" stroke="#444" strokeWidth="2" /></Glyph></span>
        <span className="flex pr-1"><Glyph w={16} h={16}><circle cx="8" cy="8" r="7.500" fill="#fff" stroke="#555" /><path d="M8 4V12M4 8H12" stroke="#333" strokeWidth="2" /></Glyph></span>
      </div>
    </div>
  );
}

const APP = "flex h-10 w-12 items-center justify-center border-b-2";

function Taskbar() {
  return (
    <footer className="flex h-10 shrink-0 items-stretch bg-[linear-gradient(90deg,#e6d3d5_0%,#e3d3dc_28%,#ecdcd6_35%,#ecdfdb_45%,#d7dce8_51%,#d7dce8_54%,#eadcdb_57%,#eedfdb_70%,#e0e3e9_73%,#e9e8ea_76%,#d9dee7_81%,#d3d9e4_100%)] text-black">
      <IconButton label="Start" className="w-12"><FaWindows size={17} /></IconButton>
      <label className="flex w-[288px] items-center gap-2.5 border border-[#c9c9c9] bg-white pl-3">
        <Search size={17} strokeWidth={1.6} className="-scale-x-100" />
        <input aria-label="Buscar" placeholder="Buscar" className="min-w-0 flex-1 text-[13px] outline-none placeholder:text-[#333]" />
      </label>
      <IconButton label="Task view" className="w-12">
        <Glyph w={17} h={16}><path d="M.5 0V3H11.500V0M.5 16V13H11.500V16M1.500 5.500H10.500V10.500H1.500ZM14.500 0V16" stroke="#000" /><path d="M13 4H17V8H13Z" fill="#000" stroke="none" /></Glyph>
      </IconButton>
      <div className="ml-[3px] flex gap-px">
        <button aria-label="Edge" className={`${APP} border-transparent`}>
          <svg width="24" height="24" viewBox="0 0 24 24">
            <defs><linearGradient id="edge" x1="0" y1="0" x2="1" y2=".4"><stop offset="0" stopColor="#1593dc" /><stop offset=".55" stopColor="#2fc2c8" /><stop offset="1" stopColor="#66d84f" /></linearGradient></defs>
            <circle cx="12" cy="12" r="12" fill="#0f59a8" />
            <path d="M0 12C0 4 6 0 12 0C19 0 24 5 24 10C24 14 21 16 17 16C14 16 13 15 14 13.500C16 10 12 7 8 7C4 7 1 9 0 12Z" fill="url(#edge)" />
            <path d="M0 12C1 9 4 7 8 7.500C4 11 6 20 13 24C6 24 0 19 0 12Z" fill="#1c86d6" />
            <path d="M14 13.500C13 15 14 16 17 16C20 16 22 15 23 14L22 18C19 20 12 20 10 15C10 11 13 11 14 13.500Z" fill="#e8e6ea" />
          </svg>
        </button>
        <button aria-label="File Explorer" className={`${APP} border-[#1477d4]`}>
          <svg width="22" height="20" viewBox="0 0 22 20"><path d="M0 1H9L10 3H0Z" fill="#d89a1c" /><path d="M0 3H21V17H0Z" fill="#fbd45e" /><path d="M4 19V11H18V19H14V15H8V19Z" fill="#3d94dc" /></svg>
        </button>
        <button aria-label="Mail" className={`${APP} border-transparent`}>
          <svg width="24" height="22" viewBox="0 0 24 22"><path d="M0 8L12 0L24 8V22H0Z" fill="#1060a8" /><path d="M3 7H21V15H3Z" fill="#f4f6f8" /><path d="M0 8L12 15L24 8V22H0Z" fill="#28a2ea" /><path d="M24 8L12 15L0 22H24Z" fill="#45c4f4" /></svg>
        </button>
        <button aria-label="Chrome" className={`${APP} border-[#1477d4]`}>
          <svg width="24" height="24" viewBox="0 0 24 24"><circle cx="12" cy="12" r="12" fill="#fcc934" /><path d="M12 12L1.600 6A12 12 0 0 1 22.400 6H12Z" fill="#e04232" /><path d="M12 12L12.500 24A12 12 0 0 1 1.600 6L7 15L15 17Z" fill="#2b9a49" /><circle cx="12" cy="12" r="6" fill="#fff" /><circle cx="12" cy="12" r="4.600" fill="#3a7ef0" /></svg>
        </button>
        <button aria-label="AutoCAD" className={`${APP} border-[#1477d4] bg-[#f6f1f0]`}>
          <svg width="24" height="22" viewBox="0 0 24 22"><rect width="21" height="19" fill="#fae2dc" /><path d="M8 2H14L21 20H16L11 8L7 20H3Z" fill="#c01822" /><path d="M5 14C10 11 14 12 18 15L19 18C14 15 9 15 4 18Z" fill="#e03c40" /></svg>
        </button>
        <button aria-label="Paint" className={`${APP} border-[#1477d4]`}>
          <svg width="24" height="24" viewBox="0 0 24 24"><path d="M11 5C17 4 22 8 22 13C22 19 16 22 12 22C8 22 10 18 7 18C3 18 0 17 1 13C2 8 6 6 11 5Z" fill="#b4dcec" stroke="#4f94ad" strokeWidth=".7" /><circle cx="5" cy="13" r="2" fill="#d84740" /><circle cx="9" cy="9" r="2" fill="#49a84b" /><circle cx="14" cy="8" r="2" fill="#f2c443" /><circle cx="14" cy="18" r="1.500" fill="#3a76c4" /><path d="M14 19L20 4L22 5L16 21Z" fill="#ed9b35" /><path d="M19 5C18 2 20 1 23 0C25 2 23 4 22 6Z" fill="#b1865c" /></svg>
        </button>
      </div>
      <div className="ml-auto flex items-center">
        <IconButton label="Show hidden icons" className="w-6"><Glyph w={12} h={7}><path d="M.5 6.500L6 1L11.500 6.500" stroke="#000" strokeWidth="1.400" /></Glyph></IconButton>
        <IconButton label="Meet now" className="w-6"><Glyph w={12} h={16}><path d="M1.500 4.500H7.500V11.500H1.500ZM8 7L11 5.500V10.500L8 9M2 2C4 .5 7 .5 9 2M2 14C4 15.500 7 15.500 9 14" stroke="#000" strokeWidth="1.200" /></Glyph></IconButton>
        <IconButton label="Battery" className="w-6"><Glyph w={17} h={12}><path d="M4.500 3.500H14.500V10.500H4.500ZM15 6H16.500V8H15M0 2H4V5H0ZM2 5V9H4M1 0V2M3 0V2" stroke="#000" /><path d="M6 5H13V9H6Z" fill="#000" stroke="none" /></Glyph></IconButton>
        <IconButton label="Network" className="w-[25px]"><Glyph w={13} h={13}><path d="M.5 13A12 12 0 0 1 12.500 1M4 13A8.500 8.500 0 0 1 12.500 4.500M8 13A4.500 4.500 0 0 1 12.500 8" stroke="#000" strokeWidth="1.200" /><circle cx="11.500" cy="12" r="1.300" fill="#000" stroke="none" /></Glyph></IconButton>
        <IconButton label="Volume" className="w-6"><Glyph w={17} h={14}><path d="M.5 4.500H3L7 1V13L3 9.500H.5ZM9 4.500C10 6 10 8 9 9.500M11 3C13 5 13 9 11 11M13 1.500C16 4 16 10 13 12.500" stroke="#000" /></Glyph></IconButton>
        <div className="flex w-[68px] flex-col items-center whitespace-nowrap text-[11px] leading-[18px]"><span>04:38 p. m.</span><span>24/08/2024</span></div>
        <button aria-label="Notifications" className="relative w-12 pl-3.5">
          <Glyph w={17} h={16}><path d="M0 0H16V13H7L3 16V13H0Z" fill="#000" stroke="none" /><path d="M3 4H13M3 7H13M3 10H10" stroke="#ddd" /></Glyph>
          <span className="absolute left-[21px] top-1.5 size-4 rounded-full border border-[#888] bg-[#c9ccd4] text-center text-[12px] leading-[14px]">2</span>
        </button>
        <IconButton label="Copilot" className="mr-[22px] w-6">
          <svg width="21" height="20" viewBox="0 0 21 20"><path d="M4 3C5 1 6 0 8 0H13C15 0 15 3 16 4H10L6 14H3C0 14 0 12 1 10Z" fill="#1c8fe4" /><path d="M1 9L3 5L8 9L6 14H3C0 14 0 12 1 9Z" fill="#44c26c" /><path d="M12 4H17C21 4 21 7 20 10L17 18H9Z" fill="#b455e0" /><path d="M10 10H20L18 15H9Z" fill="#f26a70" /><rect x="5" y="13" width="15" height="7" fill="#fbc912" /><text x="6" y="18.500" fontSize="6" fontWeight="700" fontFamily="Roboto, sans-serif">PRE</text></svg>
        </IconButton>
      </div>
    </footer>
  );
}

export default function App() {
  return (
    <div className="flex h-screen min-w-[1240px] flex-col overflow-hidden bg-[#bdbdbd] font-['Noto_Sans','Open_Sans',sans-serif]">
      <div className="flex min-h-0 flex-1">
        <LeftEdge />
        <div className="flex min-w-0 flex-1 flex-col border-t-2 border-[#ddd]">
          <Header />
          <Ribbon />
          <FileTabs />
          <Viewport />
          <StatusBar />
        </div>
        <RightEdge />
      </div>
      <div className="h-[7px] shrink-0 bg-linear-to-b from-[#a8a8a8] to-[#cfcfcf]" />
      <Taskbar />
    </div>
  );
}
